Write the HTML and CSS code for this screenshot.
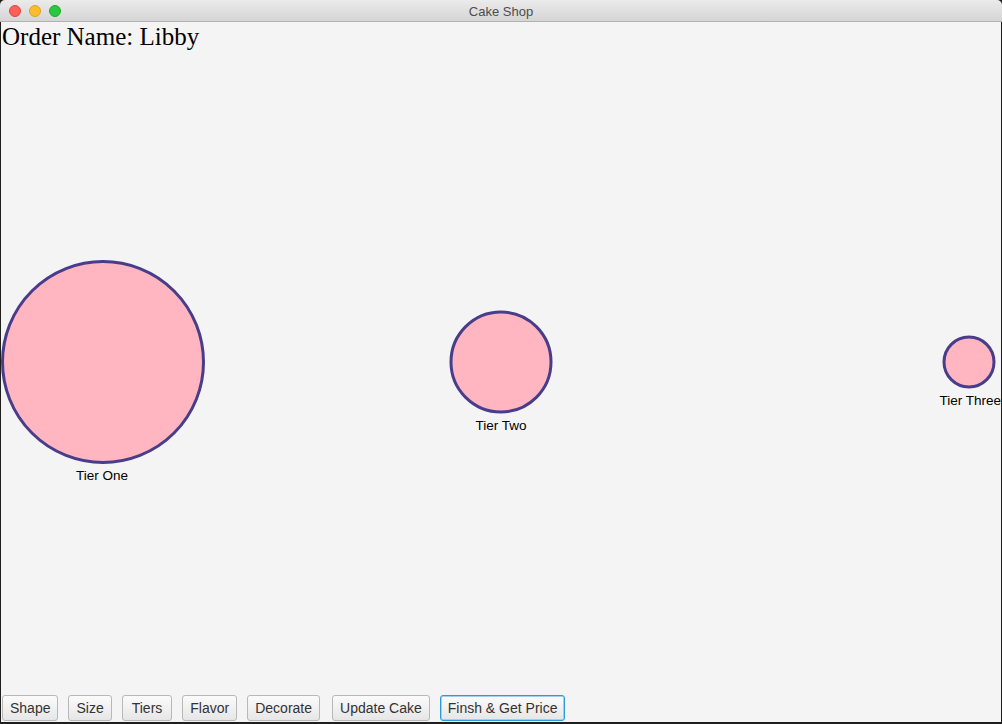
FILE: index.html
```html
<!DOCTYPE html>
<html>
<head>
<meta charset="utf-8">
<link rel="stylesheet" href="styles.css">
</head>
<body>
<div class="window">
  <div class="titlebar">
    <div class="lights">
      <span class="light red"></span>
      <span class="light yellow"></span>
      <span class="light green"></span>
    </div>
    <div class="title">Cake Shop</div>
  </div>
  <div class="content">
    <div class="order">Order Name: Libby</div>
    <div class="stage">
      <div class="tier tier-one">
        <svg class="circle" width="204" height="204" viewBox="0 0 204 204"><circle cx="102" cy="102" r="100.5" fill="#ffb6c1" stroke="#483d8b" stroke-width="3"/></svg>
        <div class="label">Tier One</div>
      </div>
      <div class="tier tier-two">
        <svg class="circle" width="104" height="104" viewBox="0 0 104 104"><circle cx="52" cy="52" r="50" fill="#ffb6c1" stroke="#483d8b" stroke-width="3"/></svg>
        <div class="label">Tier Two</div>
      </div>
      <div class="tier tier-three">
        <svg class="circle" width="54" height="54" viewBox="0 0 54 54"><circle cx="27" cy="27" r="25" fill="#ffb6c1" stroke="#483d8b" stroke-width="3"/></svg>
        <div class="label">Tier Three</div>
      </div>
    </div>
    <div class="buttons">
      <button class="btn">Shape</button>
      <button class="btn">Size</button>
      <button class="btn btn-tiers">Tiers</button>
      <button class="btn">Flavor</button>
      <button class="btn">Decorate</button>
      <button class="btn btn-update">Update Cake</button>
      <button class="btn focused">Finsh &amp; Get Price</button>
    </div>
  </div>
</div>
</body>
</html>
```
FILE: styles.css
```css
html, body {
  margin: 0;
  padding: 0;
  background: #1e1e1e;
}
.window {
  width: 1002px;
  height: 724px;
  box-sizing: border-box;
  display: flex;
  flex-direction: column;
  background: #1e1e1e;
  padding: 0 1px 2px 1px;
}
.titlebar {
  height: 22px;
  flex: none;
  box-sizing: border-box;
  margin: 0 -1px;
  background: linear-gradient(#ebebeb, #d5d5d5);
  border-bottom: 1px solid #b1b1b1;
  border-radius: 5px 5px 0 0;
  display: flex;
  align-items: center;
  justify-content: center;
  position: relative;
}
.lights {
  position: absolute;
  left: 9px;
  top: 5px;
  display: flex;
  gap: 8px;
}
.light {
  width: 12px;
  height: 12px;
  border-radius: 50%;
  box-sizing: border-box;
}
.red { background: #fc5f57; border: 1px solid #e0443e; }
.yellow { background: #fdbc2e; border: 1px solid #dea123; }
.green { background: #28c840; border: 1px solid #1aab29; }
.title {
  font-family: "Liberation Sans", Arial, sans-serif;
  font-size: 13px;
  color: #4d4d4d;
  padding-top: 1px;
}
.content {
  flex: 1;
  background: #f4f4f4;
  display: flex;
  flex-direction: column;
}
.order {
  font-family: "Liberation Serif", "Times New Roman", serif;
  font-size: 25px;
  line-height: 29px;
  color: #000;
  padding-left: 1px;
}
.stage {
  flex: 1;
  display: flex;
  align-items: center;
  padding-bottom: 22px;
}
.tier {
  display: flex;
  flex-direction: column;
  align-items: center;
  padding-top: 20px;
}
.tier-one, .tier-three {
  flex: 1;
}
.tier-one { align-items: flex-start; }
.tier-one .label { align-self: flex-start; margin-left: 75px; }
.tier-three { align-items: flex-end; }
.tier-three .circle { margin-right: 5px; }
.circle { display: block; }
.label {
  font-family: "Liberation Sans", Arial, sans-serif;
  font-size: 13.5px;
  line-height: 16px;
  margin-top: 4px;
  color: #000;
}
.buttons {
  display: flex;
  gap: 10px;
  padding: 1px 0 0 1px;
  height: 28px;
  box-sizing: border-box;
  align-items: flex-start;
}
.btn {
  font-family: "Liberation Sans", Arial, sans-serif;
  font-size: 14px;
  color: #333;
  height: 26px;
  padding: 0 7px;
  margin: 0;
  border: 1px solid #b8b8b8;
  border-radius: 3px;
  background: linear-gradient(#fbfbfb, #e6e6e6);
}
.btn-tiers { padding: 0 9px; }
.btn-update { margin-left: 2px; }
.btn.focused {
  border: 1px solid #2a9ad8;
  box-shadow: inset 0 0 0 1px #9fd0ee;
}
```
